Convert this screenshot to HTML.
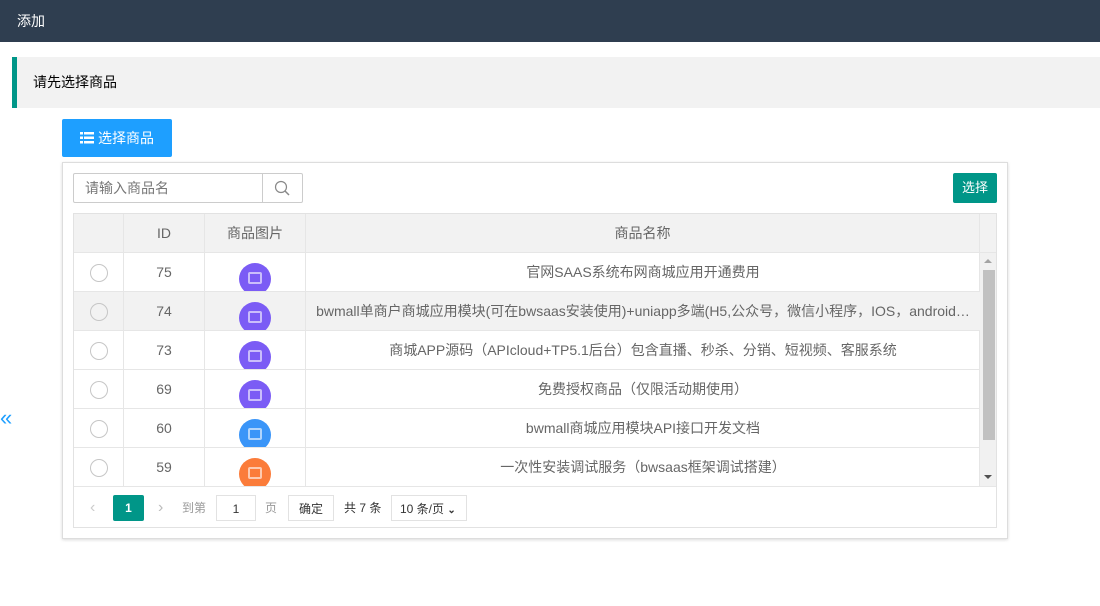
<!DOCTYPE html>
<html><head><meta charset="utf-8"><style>
*{box-sizing:border-box;margin:0;padding:0}
body{width:1100px;height:606px;background:#fff;font-family:"Liberation Sans","Noto Sans CJK SC",sans-serif;font-size:14px;color:#666;position:relative;overflow:hidden}
.hd{position:absolute;left:0;top:0;width:1100px;height:42px;background:#2f3e50;color:#fff;font-size:14px;line-height:42px;padding-left:17px}
.tip{position:absolute;left:12px;top:57px;width:1088px;height:51px;background:#f2f2f2;border-left:5px solid #009688;line-height:51px;padding-left:16px;color:#000;font-size:14px}
.btn{position:absolute;left:62px;top:119px;width:110px;height:38px;background:#1e9fff;color:#fff;border-radius:2px;line-height:38px;text-align:center;font-size:14px}
.panel{position:absolute;left:62px;top:162px;width:946px;height:377px;border:1px solid #ddd;box-shadow:0 1px 3px rgba(0,0,0,.15)}
.inp{position:absolute;left:73px;top:173px;width:190px;height:30px;border:1px solid #ccc;border-radius:2px 0 0 2px;line-height:28px;padding-left:11px;color:#777}
.sb{position:absolute;left:262px;top:173px;width:41px;height:30px;border:1px solid #ccc;border-radius:0 2px 2px 0}
.sel{position:absolute;left:953px;top:173px;width:44px;height:30px;background:#009688;color:#fff;border-radius:2px;text-align:center;line-height:30px;font-size:13px}
.tbl{position:absolute;left:73px;top:213px;width:924px;height:315px;border:1px solid #e2e2e2}
.row{position:absolute;left:0;width:906px;height:39px;border-bottom:1px solid #e6e6e6;overflow:hidden}
.c{position:absolute;top:0;height:39px;line-height:38px;text-align:center;border-right:1px solid #e6e6e6;overflow:hidden}
.c0{left:0;width:50px}.c1{left:50px;width:81px}.c2{left:131px;width:101px}.c3{left:232px;width:674px;border-right:none;white-space:nowrap;text-overflow:ellipsis;padding:0 10px}
.rad{display:inline-block;width:18px;height:18px;border:1px solid #c6c6c6;border-radius:50%;vertical-align:middle}
.ic{position:absolute;left:34px;top:10px;width:32px;height:32px;border-radius:50%}
.ic i{position:absolute;left:9px;top:9px;width:14px;height:12px;border:2px solid rgba(255,255,255,.6);border-radius:2px}
.pg{position:absolute;left:0;top:272px;width:922px;height:41px;border-top:1px solid #e6e6e6;font-size:12px}
.pg span{position:absolute;top:8px;height:26px;line-height:26px}
</style></head><body>
<div class="hd">添加</div>
<div class="tip">请先选择商品</div>
<div class="btn"><svg width="14" height="12" style="vertical-align:-1px;margin-right:4px"><g fill="#fff"><rect x="0" y="0" width="3" height="2.5"/><rect x="4" y="0" width="10" height="2.5"/><rect x="0" y="4.5" width="3" height="2.5"/><rect x="4" y="4.5" width="10" height="2.5"/><rect x="0" y="9" width="3" height="2.5"/><rect x="4" y="9" width="10" height="2.5"/></g></svg>选择商品</div>
<div class="panel"></div>
<div class="inp">请输入商品名</div>
<div class="sb"><svg width="41" height="28"><circle cx="18" cy="13" r="5.5" fill="none" stroke="#888" stroke-width="1.2"/><line x1="22" y1="17" x2="26" y2="21" stroke="#888" stroke-width="1.5"/></svg></div>
<div class="sel">选择</div>
<div class="tbl">
 <div class="row" style="top:0;width:922px;background:#f2f2f2;height:39px">
  <div class="c c0"></div><div class="c c1">ID</div><div class="c c2">商品图片</div><div class="c c3" style="width:674px;border-right:1px solid #e6e6e6">商品名称</div>
 </div>
 <div style="position:absolute;left:905px;top:39px;width:17px;height:233px;background:#f1f1f1;border-left:1px solid #e6e6e6">
  <div style="position:absolute;left:4px;top:6px;border:4px solid transparent;border-bottom:4px solid #a3a3a3;border-top:none"></div>
  <div style="position:absolute;left:3px;top:17px;width:12px;height:170px;background:#c1c1c1"></div>
  <div style="position:absolute;left:4px;top:222px;border:4px solid transparent;border-top:4px solid #505050;border-bottom:none"></div>
 </div>
 <div class="row" style="top:39px"><div class="c c0"><span class="rad"></span></div><div class="c c1">75</div><div class="c c2"><div class="ic" style="background:#7b5cf5"><i></i></div></div><div class="c c3">官网SAAS系统布网商城应用开通费用</div></div>
 <div class="row" style="top:78px;background:#f2f2f2"><div class="c c0"><span class="rad"></span></div><div class="c c1">74</div><div class="c c2"><div class="ic" style="background:#7b5cf5"><i></i></div></div><div class="c c3">bwmall单商户商城应用模块(可在bwsaas安装使用)+uniapp多端(H5,公众号，微信小程序，IOS，android…</div></div>
 <div class="row" style="top:117px"><div class="c c0"><span class="rad"></span></div><div class="c c1">73</div><div class="c c2"><div class="ic" style="background:#7b5cf5"><i></i></div></div><div class="c c3">商城APP源码（APIcloud+TP5.1后台）包含直播、秒杀、分销、短视频、客服系统</div></div>
 <div class="row" style="top:156px"><div class="c c0"><span class="rad"></span></div><div class="c c1">69</div><div class="c c2"><div class="ic" style="background:#7b5cf5"><i></i></div></div><div class="c c3">免费授权商品（仅限活动期使用）</div></div>
 <div class="row" style="top:195px"><div class="c c0"><span class="rad"></span></div><div class="c c1">60</div><div class="c c2"><div class="ic" style="background:#3a95f8"><i></i></div></div><div class="c c3">bwmall商城应用模块API接口开发文档</div></div>
 <div class="row" style="top:234px;height:38px;border-bottom:none"><div class="c c0"><span class="rad"></span></div><div class="c c1">59</div><div class="c c2"><div class="ic" style="background:#fb7c3a"><i></i></div></div><div class="c c3">一次性安装调试服务（bwsaas框架调试搭建）</div></div>
 <div class="pg">
  <span style="left:16px;color:#ccc;font-size:16px">‹</span>
  <span style="left:39px;width:31px;background:#009688;color:#fff;text-align:center;border-radius:2px;font-weight:bold">1</span>
  <span style="left:84px;color:#bbb;font-size:16px">›</span>
  <span style="left:108px;color:#999">到第</span>
  <span style="left:142px;width:40px;border:1px solid #e2e2e2;text-align:center;color:#333">1</span>
  <span style="left:191px;color:#999">页</span>
  <span style="left:214px;width:46px;border:1px solid #e2e2e2;text-align:center;color:#333">确定</span>
  <span style="left:270px;color:#333">共 7 条</span>
  <span style="left:317px;width:76px;border:1px solid #e2e2e2;color:#333;padding-left:8px">10 条/页 <b style="font-size:10px">⌄</b></span>
 </div>
</div>
<div style="position:absolute;left:0;top:405px;color:#1e9fff;font-size:22px">«</div>
</body></html>
